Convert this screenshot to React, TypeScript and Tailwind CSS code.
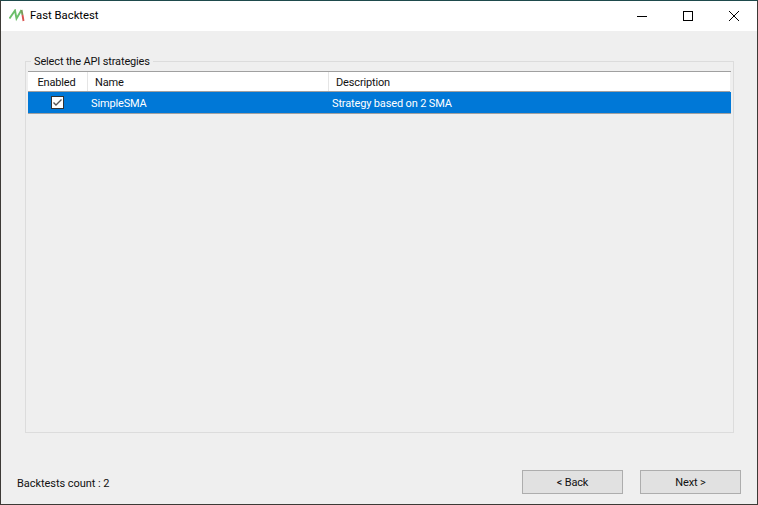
const font = "[font-family:Roboto,sans-serif]";

const App = () => {
  return (
    <div className={`w-[758px] h-[505px] flex flex-col bg-[#efefef] border border-t-[#1e4a4c] border-x-[#3d3a36] border-b-[#3d3a36] text-[11px] tracking-[-0.15px] leading-none text-[#111] overflow-hidden ${font}`}>
      {/* Title bar */}
      <div className="h-[30px] shrink-0 bg-white flex items-center">
        <svg width="16" height="14" viewBox="0 0 16 14" className="ml-[8px]">
          <path d="M0.5 9.5L6 1.5L7.5 9.5L12.5 1" fill="none" stroke="#6cbf6a" strokeWidth="1.9" />
          <path d="M12.5 1L13.5 6" fill="none" stroke="#7a9a5a" strokeWidth="1.9" />
          <path d="M13.5 6L14.5 12" fill="none" stroke="#d9534f" strokeWidth="1.9" />
        </svg>
        <span className="ml-[5px] text-[11.3px] tracking-normal text-[#000]">Fast Backtest</span>
        <div className="ml-auto flex h-full items-center">
          <div className="w-[46px] flex justify-center">
            <svg width="10" height="10" viewBox="0 0 10 10"><path d="M0 5.5H10" stroke="#000" strokeWidth="1" /></svg>
          </div>
          <div className="w-[46px] flex justify-center">
            <svg width="10" height="10" viewBox="0 0 10 10"><rect x="0.5" y="0.5" width="9" height="9" fill="none" stroke="#000" strokeWidth="1" /></svg>
          </div>
          <div className="w-[46px] flex justify-center">
            <svg width="10" height="10" viewBox="0 0 10 10"><path d="M0 0L10 10M10 0L0 10" stroke="#000" strokeWidth="1" /></svg>
          </div>
        </div>
      </div>

      {/* Group box */}
      <div className="relative mt-[30px] ml-[24px] mr-[23px] h-[372px] border border-[#dcdcdc] pt-[9px] px-[2px]">
        <span className="absolute left-[5px] -top-[6px] bg-[#efefef] px-[3px] leading-[12px]">Select the API strategies</span>
        <div className="border-t border-t-[#a0a0a0]">
          <div className="flex h-[20px] bg-white items-center border-b border-b-[#a0a0a0] mr-[1px]">
            <div className="w-[60px] h-full pt-[2px] pr-[2px] border-r border-r-[#e5e5e5] flex items-center justify-center">Enabled</div>
            <div className="w-[241px] h-full pt-[2px] border-r border-r-[#e5e5e5] flex items-center pl-[7px]">Name</div>
            <div className="flex-1 h-full pt-[2px] flex items-center pl-[7px]">Description</div>
          </div>
          <div className="flex h-[22px] bg-[#0078d7] items-center text-white border-b border-b-[#a0a0a0]">
            <div className="w-[60px] pr-[1px] flex justify-center">
              <div className="w-[13px] h-[13px] bg-white border border-[#333] flex items-center justify-center">
                <svg width="11" height="11" viewBox="0 0 11 11"><path d="M1.5 5.5L4 8L9.5 2.5" fill="none" stroke="#555" strokeWidth="1.4" /></svg>
              </div>
            </div>
            <div className="w-[241px] h-full pt-[2px] flex items-center pl-[3px]">SimpleSMA</div>
            <div className="flex-1 h-full pt-[2px] flex items-center pl-[3px]">Strategy based on 2 SMA</div>
          </div>
        </div>
      </div>

      {/* Footer */}
      <div className="flex items-center mt-[37px] pl-[16px] pr-[16px]">
        <span className="pt-[2px] tracking-[-0.05px]">Backtests count : 2</span>
        <button className="ml-auto w-[101px] h-[24px] bg-[#e1e1e1] border border-[#adadad]">&lt; Back</button>
        <button className="ml-[17px] w-[101px] h-[24px] bg-[#e1e1e1] border border-[#adadad]">Next &gt;</button>
      </div>
    </div>
  );
};

export default App;
